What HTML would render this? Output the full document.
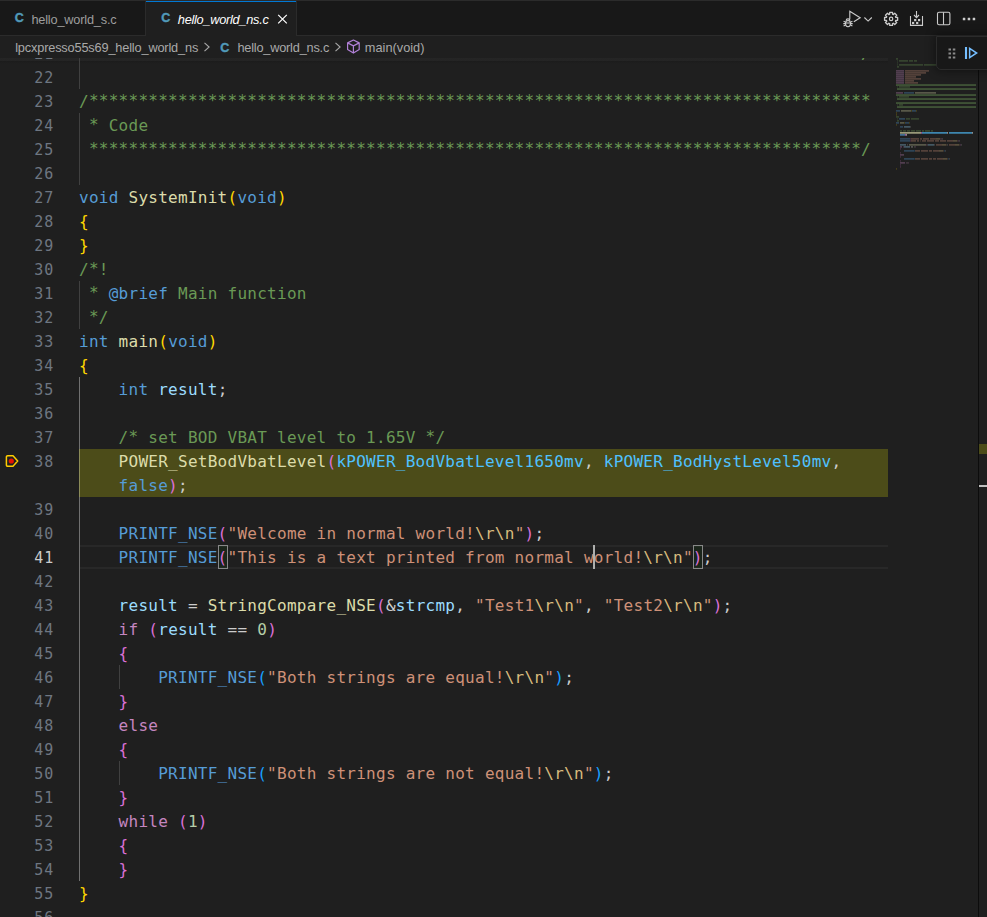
<!DOCTYPE html>
<html lang="en">
<head>
<meta charset="utf-8">
<title>hello_world_ns.c</title>
<style>
*{box-sizing:border-box;margin:0;padding:0}
html,body{width:987px;height:917px;overflow:hidden;background:#1f1f1f}
body{position:relative;font-family:"Liberation Sans",sans-serif;color:#cccccc}
.abs{position:absolute}
/* top strip */
#topline{position:absolute;left:0;top:0;width:987px;height:1px;background:#2b2b2b}
#tabs{position:absolute;left:0;top:1px;width:987px;height:35px;background:#181818;border-bottom:1px solid #2b2b2b}
.tab{position:absolute;top:0;height:35px;font-size:12.75px;line-height:35px;white-space:nowrap}
#tab1{left:0;width:146px;border-right:1px solid #2b2b2b;border-bottom:1px solid #2b2b2b;color:#9d9d9d}
#tab2{left:146px;width:151px;border-right:1px solid #2b2b2b;background:#1f1f1f;padding-top:1px;color:#ffffff;height:35px}
#tab2 i{position:absolute;left:0;top:0;width:150px;height:1px;background:#0078d4}
.cicon{position:absolute;font-weight:bold;color:#519aba;font-size:12.5px;-webkit-text-stroke:0.4px #519aba}
.tlabel{position:absolute}
#crumbs{position:absolute;left:0;top:36px;width:987px;height:22px;background:#1f1f1f;font-size:12.75px;line-height:24px;color:#a9a9a9;white-space:nowrap}
#crumbs span{position:absolute;top:0}
#shadow{position:absolute;left:0;top:58px;width:888px;height:6px;background:linear-gradient(#252525 0,#242424 50%,#1c1c1c 51%,#1f1f1f 100%)}
/* editor */
#editor{position:absolute;left:0;top:58px;width:987px;height:859px;overflow:hidden}
#inner{position:absolute;left:0;top:-58px;width:987px;height:917px}
.ln{position:absolute;left:0;width:54.1px;height:24px;line-height:24px;margin-top:1px;text-align:right;color:#6e7681;font-family:"DejaVu Sans Mono","Liberation Mono",monospace;font-size:15px;letter-spacing:0.87px;white-space:pre}
.ln.cur{color:#cccccc}
.cl{position:absolute;left:79px;height:24px;line-height:24px;margin-top:1px;font-family:"DejaVu Sans Mono","Liberation Mono",monospace;font-size:16px;letter-spacing:0.267px;white-space:pre;color:#cccccc}
.c{color:#6a9955}.st{position:relative;top:-1px}.k{color:#569cd6}.f{color:#dcdcaa}.v{color:#9cdcfe}.s{color:#ce9178}.e{color:#d7ba7d}.n{color:#b5cea8}
.m{color:#569cd6}.ct{color:#c586c0}.en{color:#4fc1ff}.b1{color:#ffd700}.b2{color:#da70d6}.b3{color:#179fff}
.bmb{position:absolute;width:10px;height:24px;border:1px solid #888888;background:rgba(0,100,0,0.1)}
.guide{position:absolute;width:1px;background:#404040}
.guide.act{background:#707070}
#hl{position:absolute;left:79px;top:449px;width:809px;height:48px;background:#4c4c19}
#curline{position:absolute;left:79px;top:545px;width:809px;height:24px;border-top:2px solid #282828;border-bottom:2px solid #282828}
#cursor{position:absolute;left:593px;top:545px;width:2px;height:24px;background:#aeafad}
.mm{position:absolute;left:896px;top:58px}
#ruler{position:absolute;left:978px;top:58px;width:9px;height:859px;border-left:1px solid #0c0c0c;background:#1f1f1f}
#dbg{position:absolute;left:936px;top:36px;width:60px;height:34px;background:#181818;border:1px solid #2b2b2b;border-radius:0 0 0 5px;box-shadow:0 0 8px 2px rgba(0,0,0,.36)}
</style>
</head>
<body>
<div id="editor"><div id="inner">
<div id="shadow"></div>
<div id="hl"></div>
<div id="curline"></div>
<div class="guide" style="left:79px;top:41px;height:48px"></div>
<div class="guide" style="left:79px;top:113px;height:72px"></div>
<div class="guide" style="left:79px;top:281px;height:48px"></div>
<div class="guide act" style="left:79px;top:377px;height:504px"></div>
<div class="guide" style="left:79px;top:449px;height:48px;background:#8b8b58"></div>
<div class="guide" style="left:119px;top:665px;height:24px"></div>
<div class="guide" style="left:119px;top:761px;height:24px"></div>
<div class="bmb" style="left:218px;top:545px"></div><div class="bmb" style="left:693px;top:545px"></div>
<div class="ln" style="top:41px">21</div>
<div class="cl" style="top:41px"><span class="c"> <span class="st">******************************************************************************</span>/</span></div>
<div class="ln" style="top:65px">22</div>
<div class="ln" style="top:89px">23</div>
<div class="cl" style="top:89px"><span class="c">/<span class="st">*******************************************************************************</span></span></div>
<div class="ln" style="top:113px">24</div>
<div class="cl" style="top:113px"><span class="c"> <span class="st">*</span> Code</span></div>
<div class="ln" style="top:137px">25</div>
<div class="cl" style="top:137px"><span class="c"> <span class="st">******************************************************************************</span>/</span></div>
<div class="ln" style="top:161px">26</div>
<div class="ln" style="top:185px">27</div>
<div class="cl" style="top:185px"><span class="k">void</span> <span class="f">SystemInit</span><span class="b1">(</span><span class="k">void</span><span class="b1">)</span></div>
<div class="ln" style="top:209px">28</div>
<div class="cl" style="top:209px"><span class="b1">{</span></div>
<div class="ln" style="top:233px">29</div>
<div class="cl" style="top:233px"><span class="b1">}</span></div>
<div class="ln" style="top:257px">30</div>
<div class="cl" style="top:257px"><span class="c">/<span class="st">*</span>!</span></div>
<div class="ln" style="top:281px">31</div>
<div class="cl" style="top:281px"><span class="c"> <span class="st">*</span> </span><span class="k">@brief</span><span class="c"> Main function</span></div>
<div class="ln" style="top:305px">32</div>
<div class="cl" style="top:305px"><span class="c"> <span class="st">*</span>/</span></div>
<div class="ln" style="top:329px">33</div>
<div class="cl" style="top:329px"><span class="k">int</span> <span class="f">main</span><span class="b1">(</span><span class="k">void</span><span class="b1">)</span></div>
<div class="ln" style="top:353px">34</div>
<div class="cl" style="top:353px"><span class="b1">{</span></div>
<div class="ln" style="top:377px">35</div>
<div class="cl" style="top:377px">    <span class="k">int</span> <span class="v">result</span>;</div>
<div class="ln" style="top:401px">36</div>
<div class="ln" style="top:425px">37</div>
<div class="cl" style="top:425px">    <span class="c">/<span class="st">*</span> set BOD VBAT level to 1.65V <span class="st">*</span>/</span></div>
<div class="ln" style="top:449px">38</div>
<div class="cl" style="top:449px">    <span class="f">POWER_SetBodVbatLevel</span><span class="b2">(</span><span class="en">kPOWER_BodVbatLevel1650mv</span>, <span class="en">kPOWER_BodHystLevel50mv</span>,</div>
<div class="cl" style="top:473px">    <span class="k">false</span><span class="b2">)</span>;</div>
<div class="ln" style="top:497px">39</div>
<div class="ln" style="top:521px">40</div>
<div class="cl" style="top:521px">    <span class="m">PRINTF_NSE</span><span class="b2">(</span><span class="s">&quot;Welcome in normal world!</span><span class="e">\r\n</span><span class="s">&quot;</span><span class="b2">)</span>;</div>
<div class="ln cur" style="top:545px">41</div>
<div class="cl" style="top:545px">    <span class="m">PRINTF_NSE</span><span class="b2">(</span><span class="s">&quot;This is a text printed from normal world!</span><span class="e">\r\n</span><span class="s">&quot;</span><span class="b2">)</span>;</div>
<div class="ln" style="top:569px">42</div>
<div class="ln" style="top:593px">43</div>
<div class="cl" style="top:593px">    <span class="v">result</span> = <span class="f">StringCompare_NSE</span><span class="b2">(</span>&amp;<span class="v">strcmp</span>, <span class="s">&quot;Test1</span><span class="e">\r\n</span><span class="s">&quot;</span>, <span class="s">&quot;Test2</span><span class="e">\r\n</span><span class="s">&quot;</span><span class="b2">)</span>;</div>
<div class="ln" style="top:617px">44</div>
<div class="cl" style="top:617px">    <span class="ct">if</span> <span class="b2">(</span><span class="v">result</span> == <span class="n">0</span><span class="b2">)</span></div>
<div class="ln" style="top:641px">45</div>
<div class="cl" style="top:641px">    <span class="b2">{</span></div>
<div class="ln" style="top:665px">46</div>
<div class="cl" style="top:665px">        <span class="m">PRINTF_NSE</span><span class="b3">(</span><span class="s">&quot;Both strings are equal!</span><span class="e">\r\n</span><span class="s">&quot;</span><span class="b3">)</span>;</div>
<div class="ln" style="top:689px">47</div>
<div class="cl" style="top:689px">    <span class="b2">}</span></div>
<div class="ln" style="top:713px">48</div>
<div class="cl" style="top:713px">    <span class="ct">else</span></div>
<div class="ln" style="top:737px">49</div>
<div class="cl" style="top:737px">    <span class="b2">{</span></div>
<div class="ln" style="top:761px">50</div>
<div class="cl" style="top:761px">        <span class="m">PRINTF_NSE</span><span class="b3">(</span><span class="s">&quot;Both strings are not equal!</span><span class="e">\r\n</span><span class="s">&quot;</span><span class="b3">)</span>;</div>
<div class="ln" style="top:785px">51</div>
<div class="cl" style="top:785px">    <span class="b2">}</span></div>
<div class="ln" style="top:809px">52</div>
<div class="cl" style="top:809px">    <span class="ct">while</span> <span class="b2">(</span><span class="n">1</span><span class="b2">)</span></div>
<div class="ln" style="top:833px">53</div>
<div class="cl" style="top:833px">    <span class="b2">{</span></div>
<div class="ln" style="top:857px">54</div>
<div class="cl" style="top:857px">    <span class="b2">}</span></div>
<div class="ln" style="top:881px">55</div>
<div class="cl" style="top:881px"><span class="b1">}</span></div>
<div class="ln" style="top:905px">56</div>
<div id="cursor"></div>
<svg class="abs" style="left:4px;top:453px" width="16" height="16" viewBox="0 0 16 16"><path d="M3.600 2.800h5.400l4.700 5.200-4.700 5.200H3.600a1.200 1.200 0 0 1-1.200-1.200V4a1.200 1.200 0 0 1 1.200-1.200z" fill="none" stroke="#ffcc00" stroke-width="1.500" stroke-linejoin="round"/><circle cx="7.300" cy="8" r="2.600" fill="#e51400"/></svg>
<svg class="mm" width="82" height="140" viewBox="0 0 82 140"><rect x="0" y="0.2" width="2" height="1.4" fill="#6a9955" opacity="0.38"/><rect x="1" y="2.2" width="1" height="1.4" fill="#6a9955" opacity="0.22"/><rect x="3" y="2.2" width="9" height="1.4" fill="#6a9955" opacity="0.38"/><rect x="13" y="2.2" width="4" height="1.4" fill="#6a9955" opacity="0.38"/><rect x="18" y="2.2" width="3" height="1.4" fill="#6a9955" opacity="0.38"/><rect x="1" y="4.2" width="1" height="1.4" fill="#6a9955" opacity="0.22"/><rect x="1" y="6.2" width="1" height="1.4" fill="#6a9955" opacity="0.22"/><rect x="3" y="6.2" width="24" height="1.4" fill="#6a9955" opacity="0.38"/><rect x="28" y="6.2" width="12" height="1.4" fill="#6a9955" opacity="0.38"/><rect x="1" y="8.2" width="2" height="1.4" fill="#6a9955" opacity="0.38"/><rect x="0" y="12.2" width="8" height="1.4" fill="#c586c0" opacity="0.38"/><rect x="9" y="12.2" width="24" height="1.4" fill="#ce9178" opacity="0.38"/><rect x="0" y="14.2" width="8" height="1.4" fill="#c586c0" opacity="0.38"/><rect x="9" y="14.2" width="21" height="1.4" fill="#ce9178" opacity="0.38"/><rect x="0" y="16.2" width="8" height="1.4" fill="#c586c0" opacity="0.38"/><rect x="9" y="16.2" width="16" height="1.4" fill="#ce9178" opacity="0.38"/><rect x="0" y="18.2" width="8" height="1.4" fill="#c586c0" opacity="0.38"/><rect x="9" y="18.2" width="11" height="1.4" fill="#ce9178" opacity="0.38"/><rect x="0" y="20.2" width="8" height="1.4" fill="#c586c0" opacity="0.38"/><rect x="9" y="20.2" width="16" height="1.4" fill="#ce9178" opacity="0.38"/><rect x="0" y="22.2" width="8" height="1.4" fill="#c586c0" opacity="0.38"/><rect x="9" y="22.2" width="9" height="1.4" fill="#ce9178" opacity="0.38"/><rect x="0" y="24.2" width="8" height="1.4" fill="#c586c0" opacity="0.38"/><rect x="9" y="24.2" width="13" height="1.4" fill="#ce9178" opacity="0.38"/><rect x="0" y="26.2" width="80" height="1.7" fill="#6a9955" opacity="0.47"/><rect x="1" y="28.2" width="1" height="1.4" fill="#6a9955" opacity="0.22"/><rect x="3" y="28.2" width="11" height="1.4" fill="#6a9955" opacity="0.38"/><rect x="1" y="30.2" width="79" height="1.7" fill="#6a9955" opacity="0.47"/><rect x="0" y="34.2" width="7" height="1.4" fill="#c586c0" opacity="0.38"/><rect x="8" y="34.2" width="10" height="1.4" fill="#569cd6" opacity="0.38"/><rect x="19" y="34.2" width="21" height="1.4" fill="#dcdcaa" opacity="0.38"/><rect x="0" y="36.2" width="80" height="1.7" fill="#6a9955" opacity="0.47"/><rect x="1" y="38.2" width="1" height="1.4" fill="#6a9955" opacity="0.22"/><rect x="3" y="38.2" width="10" height="1.4" fill="#6a9955" opacity="0.38"/><rect x="1" y="40.2" width="79" height="1.7" fill="#6a9955" opacity="0.47"/><rect x="0" y="44.2" width="80" height="1.7" fill="#6a9955" opacity="0.47"/><rect x="1" y="46.2" width="1" height="1.4" fill="#6a9955" opacity="0.22"/><rect x="3" y="46.2" width="4" height="1.4" fill="#6a9955" opacity="0.38"/><rect x="1" y="48.2" width="79" height="1.7" fill="#6a9955" opacity="0.47"/><rect x="0" y="52.2" width="4" height="1.4" fill="#569cd6" opacity="0.38"/><rect x="5" y="52.2" width="10" height="1.4" fill="#dcdcaa" opacity="0.38"/><rect x="15" y="52.2" width="1" height="1.4" fill="#ffd700" opacity="0.22"/><rect x="16" y="52.2" width="4" height="1.4" fill="#569cd6" opacity="0.38"/><rect x="20" y="52.2" width="1" height="1.4" fill="#ffd700" opacity="0.22"/><rect x="0" y="54.2" width="1" height="1.4" fill="#ffd700" opacity="0.22"/><rect x="0" y="56.2" width="1" height="1.4" fill="#ffd700" opacity="0.22"/><rect x="0" y="58.2" width="3" height="1.4" fill="#6a9955" opacity="0.38"/><rect x="1" y="60.2" width="1" height="1.4" fill="#6a9955" opacity="0.22"/><rect x="3" y="60.2" width="6" height="1.4" fill="#569cd6" opacity="0.38"/><rect x="10" y="60.2" width="4" height="1.4" fill="#6a9955" opacity="0.38"/><rect x="15" y="60.2" width="8" height="1.4" fill="#6a9955" opacity="0.38"/><rect x="1" y="62.2" width="2" height="1.4" fill="#6a9955" opacity="0.38"/><rect x="0" y="64.2" width="3" height="1.4" fill="#569cd6" opacity="0.38"/><rect x="4" y="64.2" width="4" height="1.4" fill="#dcdcaa" opacity="0.38"/><rect x="8" y="64.2" width="1" height="1.4" fill="#ffd700" opacity="0.22"/><rect x="9" y="64.2" width="4" height="1.4" fill="#569cd6" opacity="0.38"/><rect x="13" y="64.2" width="1" height="1.4" fill="#ffd700" opacity="0.22"/><rect x="0" y="66.2" width="1" height="1.4" fill="#ffd700" opacity="0.22"/><rect x="4" y="68.2" width="3" height="1.4" fill="#569cd6" opacity="0.38"/><rect x="8" y="68.2" width="6" height="1.4" fill="#9cdcfe" opacity="0.38"/><rect x="14" y="68.2" width="1" height="1.4" fill="#cccccc" opacity="0.22"/><rect x="4" y="72.2" width="2" height="1.4" fill="#6a9955" opacity="0.38"/><rect x="7" y="72.2" width="3" height="1.4" fill="#6a9955" opacity="0.38"/><rect x="11" y="72.2" width="3" height="1.4" fill="#6a9955" opacity="0.38"/><rect x="15" y="72.2" width="4" height="1.4" fill="#6a9955" opacity="0.38"/><rect x="20" y="72.2" width="5" height="1.4" fill="#6a9955" opacity="0.38"/><rect x="26" y="72.2" width="2" height="1.4" fill="#6a9955" opacity="0.38"/><rect x="29" y="72.2" width="5" height="1.4" fill="#6a9955" opacity="0.38"/><rect x="35" y="72.2" width="2" height="1.4" fill="#6a9955" opacity="0.38"/><rect x="4" y="74.2" width="21" height="1.4" fill="#dcdcaa" opacity="0.8"/><rect x="25" y="74.2" width="1" height="1.4" fill="#da70d6" opacity="0.8"/><rect x="26" y="74.2" width="25" height="1.4" fill="#4fc1ff" opacity="0.8"/><rect x="51" y="74.2" width="1" height="1.4" fill="#cccccc" opacity="0.8"/><rect x="53" y="74.2" width="23" height="1.4" fill="#4fc1ff" opacity="0.8"/><rect x="76" y="74.2" width="1" height="1.4" fill="#cccccc" opacity="0.8"/><rect x="4" y="76.2" width="5" height="1.4" fill="#569cd6" opacity="0.8"/><rect x="9" y="76.2" width="1" height="1.4" fill="#da70d6" opacity="0.8"/><rect x="10" y="76.2" width="1" height="1.4" fill="#cccccc" opacity="0.8"/><rect x="4" y="80.2" width="10" height="1.4" fill="#569cd6" opacity="0.38"/><rect x="14" y="80.2" width="1" height="1.4" fill="#da70d6" opacity="0.22"/><rect x="15" y="80.2" width="8" height="1.4" fill="#ce9178" opacity="0.38"/><rect x="24" y="80.2" width="2" height="1.4" fill="#ce9178" opacity="0.38"/><rect x="27" y="80.2" width="6" height="1.4" fill="#ce9178" opacity="0.38"/><rect x="34" y="80.2" width="6" height="1.4" fill="#ce9178" opacity="0.38"/><rect x="40" y="80.2" width="4" height="1.4" fill="#d7ba7d" opacity="0.38"/><rect x="44" y="80.2" width="1" height="1.4" fill="#ce9178" opacity="0.22"/><rect x="45" y="80.2" width="1" height="1.4" fill="#da70d6" opacity="0.22"/><rect x="46" y="80.2" width="1" height="1.4" fill="#cccccc" opacity="0.22"/><rect x="4" y="82.2" width="10" height="1.4" fill="#569cd6" opacity="0.38"/><rect x="14" y="82.2" width="1" height="1.4" fill="#da70d6" opacity="0.22"/><rect x="15" y="82.2" width="5" height="1.4" fill="#ce9178" opacity="0.38"/><rect x="21" y="82.2" width="2" height="1.4" fill="#ce9178" opacity="0.38"/><rect x="24" y="82.2" width="1" height="1.4" fill="#ce9178" opacity="0.22"/><rect x="26" y="82.2" width="4" height="1.4" fill="#ce9178" opacity="0.38"/><rect x="31" y="82.2" width="7" height="1.4" fill="#ce9178" opacity="0.38"/><rect x="39" y="82.2" width="4" height="1.4" fill="#ce9178" opacity="0.38"/><rect x="44" y="82.2" width="6" height="1.4" fill="#ce9178" opacity="0.38"/><rect x="51" y="82.2" width="6" height="1.4" fill="#ce9178" opacity="0.38"/><rect x="57" y="82.2" width="4" height="1.4" fill="#d7ba7d" opacity="0.38"/><rect x="61" y="82.2" width="1" height="1.4" fill="#ce9178" opacity="0.22"/><rect x="62" y="82.2" width="1" height="1.4" fill="#da70d6" opacity="0.22"/><rect x="63" y="82.2" width="1" height="1.4" fill="#cccccc" opacity="0.22"/><rect x="4" y="86.2" width="6" height="1.4" fill="#9cdcfe" opacity="0.38"/><rect x="11" y="86.2" width="1" height="1.4" fill="#cccccc" opacity="0.22"/><rect x="13" y="86.2" width="17" height="1.4" fill="#dcdcaa" opacity="0.38"/><rect x="30" y="86.2" width="1" height="1.4" fill="#da70d6" opacity="0.22"/><rect x="31" y="86.2" width="1" height="1.4" fill="#cccccc" opacity="0.22"/><rect x="32" y="86.2" width="6" height="1.4" fill="#9cdcfe" opacity="0.38"/><rect x="38" y="86.2" width="1" height="1.4" fill="#cccccc" opacity="0.22"/><rect x="40" y="86.2" width="6" height="1.4" fill="#ce9178" opacity="0.38"/><rect x="46" y="86.2" width="4" height="1.4" fill="#d7ba7d" opacity="0.38"/><rect x="50" y="86.2" width="1" height="1.4" fill="#ce9178" opacity="0.22"/><rect x="51" y="86.2" width="1" height="1.4" fill="#cccccc" opacity="0.22"/><rect x="53" y="86.2" width="6" height="1.4" fill="#ce9178" opacity="0.38"/><rect x="59" y="86.2" width="4" height="1.4" fill="#d7ba7d" opacity="0.38"/><rect x="63" y="86.2" width="1" height="1.4" fill="#ce9178" opacity="0.22"/><rect x="64" y="86.2" width="1" height="1.4" fill="#da70d6" opacity="0.22"/><rect x="65" y="86.2" width="1" height="1.4" fill="#cccccc" opacity="0.22"/><rect x="4" y="88.2" width="2" height="1.4" fill="#c586c0" opacity="0.38"/><rect x="7" y="88.2" width="1" height="1.4" fill="#da70d6" opacity="0.22"/><rect x="8" y="88.2" width="6" height="1.4" fill="#9cdcfe" opacity="0.38"/><rect x="15" y="88.2" width="2" height="1.4" fill="#cccccc" opacity="0.38"/><rect x="18" y="88.2" width="1" height="1.4" fill="#b5cea8" opacity="0.22"/><rect x="19" y="88.2" width="1" height="1.4" fill="#da70d6" opacity="0.22"/><rect x="4" y="90.2" width="1" height="1.4" fill="#da70d6" opacity="0.22"/><rect x="8" y="92.2" width="10" height="1.4" fill="#569cd6" opacity="0.38"/><rect x="18" y="92.2" width="1" height="1.4" fill="#179fff" opacity="0.22"/><rect x="19" y="92.2" width="5" height="1.4" fill="#ce9178" opacity="0.38"/><rect x="25" y="92.2" width="7" height="1.4" fill="#ce9178" opacity="0.38"/><rect x="33" y="92.2" width="3" height="1.4" fill="#ce9178" opacity="0.38"/><rect x="37" y="92.2" width="6" height="1.4" fill="#ce9178" opacity="0.38"/><rect x="43" y="92.2" width="4" height="1.4" fill="#d7ba7d" opacity="0.38"/><rect x="47" y="92.2" width="1" height="1.4" fill="#ce9178" opacity="0.22"/><rect x="48" y="92.2" width="1" height="1.4" fill="#179fff" opacity="0.22"/><rect x="49" y="92.2" width="1" height="1.4" fill="#cccccc" opacity="0.22"/><rect x="4" y="94.2" width="1" height="1.4" fill="#da70d6" opacity="0.22"/><rect x="4" y="96.2" width="4" height="1.4" fill="#c586c0" opacity="0.38"/><rect x="4" y="98.2" width="1" height="1.4" fill="#da70d6" opacity="0.22"/><rect x="8" y="100.2" width="10" height="1.4" fill="#569cd6" opacity="0.38"/><rect x="18" y="100.2" width="1" height="1.4" fill="#179fff" opacity="0.22"/><rect x="19" y="100.2" width="5" height="1.4" fill="#ce9178" opacity="0.38"/><rect x="25" y="100.2" width="7" height="1.4" fill="#ce9178" opacity="0.38"/><rect x="33" y="100.2" width="3" height="1.4" fill="#ce9178" opacity="0.38"/><rect x="37" y="100.2" width="3" height="1.4" fill="#ce9178" opacity="0.38"/><rect x="41" y="100.2" width="6" height="1.4" fill="#ce9178" opacity="0.38"/><rect x="47" y="100.2" width="4" height="1.4" fill="#d7ba7d" opacity="0.38"/><rect x="51" y="100.2" width="1" height="1.4" fill="#ce9178" opacity="0.22"/><rect x="52" y="100.2" width="1" height="1.4" fill="#179fff" opacity="0.22"/><rect x="53" y="100.2" width="1" height="1.4" fill="#cccccc" opacity="0.22"/><rect x="4" y="102.2" width="1" height="1.4" fill="#da70d6" opacity="0.22"/><rect x="4" y="104.2" width="5" height="1.4" fill="#c586c0" opacity="0.38"/><rect x="10" y="104.2" width="1" height="1.4" fill="#da70d6" opacity="0.22"/><rect x="11" y="104.2" width="1" height="1.4" fill="#b5cea8" opacity="0.22"/><rect x="12" y="104.2" width="1" height="1.4" fill="#da70d6" opacity="0.22"/><rect x="4" y="106.2" width="1" height="1.4" fill="#da70d6" opacity="0.22"/><rect x="4" y="108.2" width="1" height="1.4" fill="#da70d6" opacity="0.22"/><rect x="0" y="110.2" width="1" height="1.4" fill="#ffd700" opacity="0.22"/></svg>
<div id="ruler">
<div class="abs" style="left:0;top:386px;width:8px;height:10px;background:#4c4c19"></div>
<div class="abs" style="left:0;top:427px;width:8px;height:2px;background:#c0c0c0"></div>
</div>
</div></div>
<div id="topline"></div>
<div id="tabs">
 <div class="tab" id="tab1"><span class="cicon" style="left:14.800px;top:0px">C</span><span class="tlabel" style="left:31.400px;top:1px;letter-spacing:-0.186px">hello_world_s.c</span></div>
 <div class="tab" id="tab2"><i></i><span class="cicon" style="left:15.200px;top:0px">C</span><span class="tlabel" style="left:31.800px;top:0.500px;font-style:italic;letter-spacing:-0.262px">hello_world_ns.c</span>
  <svg class="abs" style="left:129px;top:10px" width="16" height="16" viewBox="0 0 16 16"><path d="M3.200 3.800l8.600 8.600M11.800 3.800l-8.600 8.600" stroke="#ffffff" stroke-width="1.2" fill="none"/></svg>
 </div>
 <!-- actions -->
 <svg class="abs" style="left:840px;top:7px" width="140" height="22" viewBox="0 0 140 22" fill="none" stroke="#cccccc" stroke-width="1.1">
  <path d="M9.800 11.200V3.200l10.400 6.600-6.400 4"/>
  <ellipse cx="8" cy="15.600" rx="2.500" ry="3.100"/><path d="M3.600 13.200l2 1M3.600 18l2-1M12.400 13.200l-2 1M12.400 18l-2-1M3.300 15.600h2.200M10.500 15.600h2.200M6.100 12.800a1.900 1.900 0 0 1 3.800 0M5.800 15h4.400"/>
  <path d="M24.400 9.500l3.700 3.600 3.700-3.600"/>
  <path d="M55.79 9.47L57.65 9.51L57.65 12.29L55.79 12.33L55.43 13.20L56.72 14.55L54.75 16.52L53.40 15.23L52.53 15.59L52.49 17.45L49.71 17.45L49.67 15.59L48.80 15.23L47.45 16.52L45.48 14.55L46.77 13.20L46.41 12.33L44.55 12.29L44.55 9.51L46.41 9.47L46.77 8.60L45.48 7.25L47.45 5.28L48.80 6.57L49.67 6.21L49.71 4.35L52.49 4.35L52.53 6.21L53.40 6.57L54.75 5.28L56.72 7.25L55.43 8.60Z" stroke-width="1.300" stroke-linejoin="round"/><circle cx="51.100" cy="10.900" r="1.700" stroke-width="1.200"/>
  <path d="M70.500 7.900v9.500h12V7.900M76.500 2.900v6.600M74 7l2.500 2.600L79 7"/>
  <g fill="#cccccc" stroke="none"><rect x="74.100" y="11" width="2.200" height="2.200"/><rect x="78" y="11" width="2.200" height="2.200"/><rect x="72" y="13.900" width="2.200" height="2.200"/><rect x="76.100" y="13.900" width="2.200" height="2.200"/></g>
  <rect x="97.500" y="4.300" width="12.400" height="12.400" rx="1.500"/><path d="M103.500 4.300v12.400"/>
  <g fill="#cccccc" stroke="none"><rect x="122.800" y="9.800" width="2.500" height="2.400" rx="0.300"/><rect x="127.700" y="9.800" width="2.500" height="2.400" rx="0.300"/><rect x="132.700" y="9.800" width="2.500" height="2.400" rx="0.300"/></g>
 </svg>
</div>
<div id="crumbs">
 <span style="left:15.200px;letter-spacing:-0.164px">lpcxpresso55s69_hello_world_ns</span>
 <svg class="abs" style="left:199px;top:3px" width="16" height="16" viewBox="0 0 16 16"><path d="M5.500 3.800l4.600 4.200-4.600 4.200" stroke="#a9a9a9" stroke-width="1.1" fill="none"/></svg>
 <span class="cicon" style="left:220.200px;top:0px">C</span>
 <span style="left:237.400px;letter-spacing:-0.205px">hello_world_ns.c</span>
 <svg class="abs" style="left:330px;top:3px" width="16" height="16" viewBox="0 0 16 16"><path d="M5.500 3.800l4.600 4.200-4.600 4.200" stroke="#a9a9a9" stroke-width="1.1" fill="none"/></svg>
 <svg class="abs" style="left:346px;top:3px" width="16" height="16" viewBox="0 0 16 16"><path d="M7.400 1l5.800 2.900v6.700l-5.800 3.500-5.800-3.500V3.900zM1.600 3.900l5.800 3 5.800-3M7.400 6.900v7.200" stroke="#b180d7" stroke-width="1.200" fill="none" stroke-linejoin="round"/></svg>
 <span style="left:364.800px;letter-spacing:0.017px">main(void)</span>
</div>
<div id="dbg">
 <svg class="abs" style="left:10px;top:9.600px" width="12" height="14" viewBox="0 0 12 14"><g fill="#8a8a8a"><rect x="1.500" y="1.500" width="2.500" height="2"/><rect x="5.800" y="1.500" width="2.500" height="2"/><rect x="1.500" y="5.500" width="2.500" height="2"/><rect x="5.800" y="5.500" width="2.500" height="2"/><rect x="1.500" y="9.500" width="2.500" height="2"/><rect x="5.800" y="9.500" width="2.500" height="2"/></g></svg>
 <svg class="abs" style="left:26px;top:8px" width="18" height="18" viewBox="0 0 18 18"><path d="M3 2v12" stroke="#75beff" stroke-width="2.100" fill="none"/><path d="M6.650 3.390V12.610L13.640 8Z" stroke="#75beff" stroke-width="1.500" fill="none" stroke-linejoin="miter"/></svg>
</div>
</body>
</html>
